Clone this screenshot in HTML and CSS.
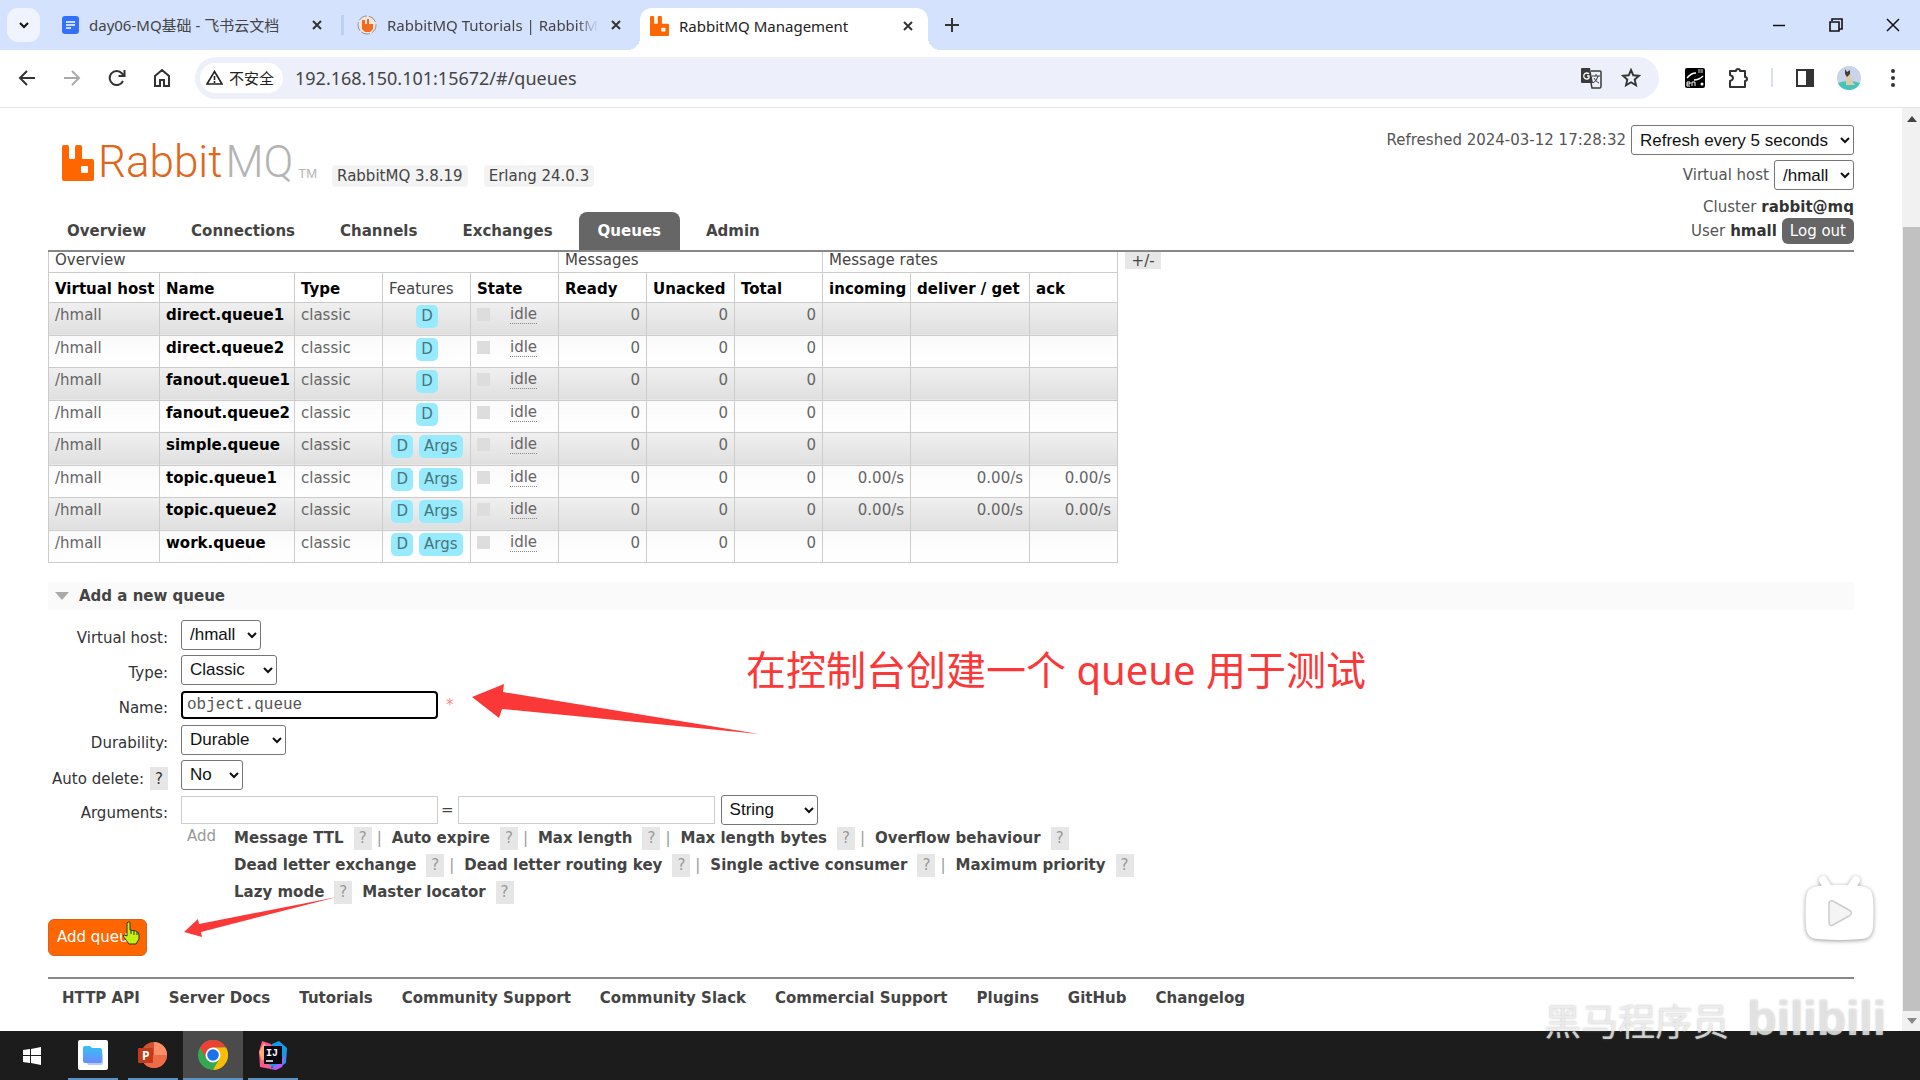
FILE: index.html
```html
<!DOCTYPE html>
<html lang="zh-CN">
<head>
    <meta charset="UTF-8">
    <meta name="viewport" content="width=device-width, initial-scale=1.0">
    <title>RabbitMQ Management</title>
    <link rel="stylesheet" href="styles.css">
</head>
<body>
    <svg class="symbols" aria-hidden="true">
        <symbol id="close" viewBox="0 0 12 12"><path d="M2 2l8 8M10 2l-8 8" fill="none" stroke="currentColor" stroke-width="2"/></symbol>
        <symbol id="rabbit" viewBox="0 0 32 36"><path d="M0 2Q0 0 2 0H5Q7 0 7 2V13Q7 14 8 14H12Q13 14 13 13V2Q13 0 15 0H18Q20 0 20 2V13Q20 14 21 14H30Q32 14 32 16V34Q32 36 30 36H2Q0 36 0 34ZM20 21Q19 21 19 22V27Q19 28 20 28H25Q26 28 26 27V22Q26 21 25 21Z" fill="#f60" fill-rule="evenodd"/></symbol>
    </svg>

    <div class="tab-strip">
        <button class="tab-search" aria-label="Search tabs">
            <svg width="12" height="12" viewBox="0 0 12 12"><path d="M2 4l4 4 4-4" fill="none" stroke="#111" stroke-width="2"/></svg>
        </button>
        <div class="tab">
            <svg width="17" height="18" viewBox="0 0 17 18"><rect width="17" height="18" rx="3" fill="#3370ff"/><path d="M4 6h9M4 9h9M4 12h5" stroke="#fff" stroke-width="1.5"/></svg>
            <span class="tab-title">day06-MQ基础 - 飞书云文档</span>
            <button class="icon-button" aria-label="Close tab"><svg width="12" height="12"><use href="#close"/></svg></button>
        </div>
        <div class="tab tab-second">
            <svg width="20" height="20" viewBox="0 0 20 20"><circle cx="10" cy="10" r="9" fill="#f3e6dc" stroke="#8a8f96" stroke-dasharray="9 2"/><path d="M5 5h3v4h2V4h2v5h4v5l-3 3H8l-3-3z" fill="#f26a21"/></svg>
            <span class="tab-title fade">RabbitMQ Tutorials | RabbitM</span>
            <button class="icon-button" aria-label="Close tab"><svg width="12" height="12"><use href="#close"/></svg></button>
        </div>
        <div class="tab active">
            <svg width="19" height="20" viewBox="0 0 32 36" preserveAspectRatio="none"><use href="#rabbit"/></svg>
            <span class="tab-title">RabbitMQ Management</span>
            <button class="icon-button" aria-label="Close tab"><svg width="12" height="12"><use href="#close"/></svg></button>
        </div>
        <button class="icon-button new-tab" aria-label="New tab">
            <svg width="14" height="14" viewBox="0 0 14 14"><path d="M7 0v14M0 7h14" stroke="#333" stroke-width="2"/></svg>
        </button>
        <div class="window-buttons">
            <button class="icon-button" aria-label="Minimize"><svg width="14" height="14" viewBox="0 0 14 14"><path d="M1 7.500h12" stroke="#111" stroke-width="1.500"/></svg></button>
            <button class="icon-button" aria-label="Restore"><svg width="14" height="14" viewBox="0 0 14 14"><path d="M1 4h9v9H1zM3 3V1h10v10h-3" fill="none" stroke="#111" stroke-width="1.600"/></svg></button>
            <button class="icon-button" aria-label="Close window"><svg width="14" height="14" viewBox="0 0 14 14"><path d="M1 1l12 12M13 1L1 13" stroke="#111" stroke-width="1.500"/></svg></button>
        </div>
    </div>

    <div class="toolbar">
        <button class="icon-button" aria-label="Back"><svg width="18" height="18" viewBox="0 0 18 18"><path d="M17 9H3M9 2L2 9l7 7" fill="none" stroke="#333" stroke-width="2"/></svg></button>
        <button class="icon-button" aria-label="Forward"><svg width="18" height="18" viewBox="0 0 18 18"><path d="M1 9h14M9 2l7 7-7 7" fill="none" stroke="#aaa" stroke-width="2"/></svg></button>
        <button class="icon-button" aria-label="Reload"><svg width="18" height="18" viewBox="0 0 18 18"><path d="M15 12A7 7 0 1 1 14 4.500L16 7M16.500 1v6h-6" fill="none" stroke="#333" stroke-width="2"/></svg></button>
        <button class="icon-button" aria-label="Home"><svg width="18" height="18" viewBox="0 0 18 18"><path d="M2 7l7-6 7 6v10h-5v-6H7v6H2z" fill="none" stroke="#333" stroke-width="2"/></svg></button>
        <div class="omnibox">
            <span class="site-chip">
                <svg width="17" height="15" viewBox="0 0 17 15"><path d="M8.500 1.500L16 14H1z" fill="none" stroke="#222" stroke-width="1.600"/><path d="M8.500 6v4M8.500 11v2" stroke="#222" stroke-width="1.600"/></svg>
                不安全
            </span>
            <input class="url" aria-label="Address" value="192.168.150.101:15672/#/queues">
            <button class="icon-button" aria-label="Translate">
                <svg width="22" height="22" viewBox="0 0 22 22"><path d="M2 1h8l3 15H2q-1 0-1-1V2q0-1 1-1z" fill="#3a3a3a"/><path d="M11 4h9q1 0 1 1v14q0 2-1 2h-8l-1-5" fill="none" stroke="#3a3a3a" stroke-width="1.500"/><path d="M9 7a3 3 0 1 0 0 4V9H7" fill="none" stroke="#fff" stroke-width="1.300"/><path d="M12 9h8M16 7v2M18 9q-1 5-5 7M14 11q2 4 5 5" fill="none" stroke="#3a3a3a"/></svg>
            </button>
            <button class="icon-button" aria-label="Bookmark">
                <svg width="20" height="20" viewBox="0 0 20 20"><path d="M10 2l2.300 5.300 5.700.5-4.300 3.800 1.300 5.700-5-3-5 3 1.300-5.700L2 7.800l5.700-.5z" fill="none" stroke="#333" stroke-width="1.900"/></svg>
            </button>
        </div>
        <div class="extensions">
            <button class="icon-button" aria-label="Translate extension"><svg width="22" height="22" viewBox="0 0 22 22"><rect x="1" y="1" width="20" height="20" rx="2"/><path d="M3 11q4-5 9-5M10 13q5 0 9-4" fill="none" stroke="#fff" stroke-width="1.500"/><path d="M14 3h5M14 5h5M15 2v4M18 2v4" stroke="#999"/><path d="M3 17h3v-2H3v4h3M8 19v-4h3v4" fill="none" stroke="#fff"/><circle cx="18" cy="17" r="1.500" fill="#fff"/></svg></button>
            <button class="icon-button" aria-label="Extensions"><svg width="22" height="22" viewBox="0 0 22 22"><path d="M2 4h6a2 2 0 0 1 4 0h5v6a2 2 0 0 1 0 4v6H2v-6q3-1 3-3T2 8z" fill="none" stroke="#333" stroke-width="2" stroke-linejoin="round"/></svg></button>
            <span class="divider"></span>
            <button class="icon-button" aria-label="Side panel"><svg width="20" height="20" viewBox="0 0 20 20"><path d="M2 2h16v16H2z" fill="none" stroke="#333" stroke-width="2"/><path d="M11 2h7v16h-7z" fill="#333"/></svg></button>
            <button class="icon-button" aria-label="Profile"><svg width="24" height="24" viewBox="0 0 24 24"><circle cx="12" cy="12" r="12" fill="#c9d3ea"/><path d="M1 17q11-4 22 0-3 7-11 7T1 17z" fill="#46c3ba"/><path d="M9 8l4-1 2 8 3 4H9z" fill="#dfcba8"/><path d="M8 3l2 3 3-2v4l-3 3-2-3z" fill="#453d3b"/></svg></button>
            <button class="icon-button" aria-label="Menu"><svg width="20" height="20" viewBox="0 0 20 20"><g fill="#333"><circle cx="10" cy="3" r="2"/><circle cx="10" cy="10" r="2"/><circle cx="10" cy="17" r="2"/></g></svg></button>
        </div>
    </div>

    <div class="viewport">
        <div class="page">
            <header class="header">
                <div class="header-left">
                    <div class="brand">
                        <svg width="32" height="36"><use href="#rabbit"/></svg>
                        <a href="#/" class="logo">Rabbit<span>MQ</span></a>
                        <small class="tm">TM</small>
                        <span class="version">RabbitMQ 3.8.19</span>
                        <span class="version">Erlang 24.0.3</span>
                    </div>
                    <nav class="nav">
                        <a href="#/">Overview</a>
                        <a href="#/connections">Connections</a>
                        <a href="#/channels">Channels</a>
                        <a href="#/exchanges">Exchanges</a>
                        <a href="#/queues" class="selected">Queues</a>
                        <a href="#/users">Admin</a>
                    </nav>
                </div>
                <div class="status">
                    <div class="status-row">
                        <label for="refresh">Refreshed 2024-03-12 17:28:32</label>
                        <select id="refresh"><option>Refresh every 5 seconds</option></select>
                    </div>
                    <div class="status-row">
                        <label for="show-vhost">Virtual host</label>
                        <select id="show-vhost"><option>/hmall</option></select>
                    </div>
                    <div class="status-row short">Cluster <b>rabbit@mq</b></div>
                    <div class="status-row short">User <b>hmall</b> <button class="logout">Log out</button></div>
                </div>
            </header>

            <main>
                <div class="table-wrap">
                    <table class="queues">
                        <colgroup>
                            <col class="w-host"><col class="w-name"><col class="w-col"><col class="w-col"><col class="w-col">
                            <col class="w-col"><col class="w-col"><col class="w-col">
                            <col class="w-col"><col class="w-get"><col class="w-col">
                        </colgroup>
                        <thead>
                            <tr class="groups"><th colspan="5">Overview</th><th colspan="3">Messages</th><th colspan="3">Message rates</th></tr>
                            <tr class="names">
                                <th>Virtual host</th><th>Name</th><th>Type</th><th class="plain">Features</th><th>State</th>
                                <th>Ready</th><th>Unacked</th><th>Total</th><th>incoming</th><th>deliver / get</th><th>ack</th>
                            </tr>
                        </thead>
                        <tbody id="queueRows"></tbody>
                    </table>
                    <button class="columns">+/-</button>
                </div>

                <h2 class="section-title">Add a new queue</h2>
                <form class="queue-form">
                    <label for="vhost">Virtual host:</label>
                    <div class="field"><select id="vhost"><option>/hmall</option></select></div>
                    <label for="type">Type:</label>
                    <div class="field"><select id="type"><option>Classic</option><option>Quorum</option></select></div>
                    <label for="name">Name:</label>
                    <div class="field"><input id="name" class="text name" value="object.queue"><span class="mand">*</span></div>
                    <label for="durable">Durability:</label>
                    <div class="field"><select id="durable"><option>Durable</option><option>Transient</option></select></div>
                    <div class="label-help"><label for="auto">Auto delete:</label><button type="button" class="help dark">?</button></div>
                    <div class="field"><select id="auto"><option>No</option><option>Yes</option></select></div>
                    <label for="arg-key">Arguments:</label>
                    <div class="field">
                        <input id="arg-key" class="text"><span class="equals">=</span><input class="text" aria-label="Argument value">
                        <select aria-label="Argument type"><option>String</option><option>Number</option><option>Boolean</option><option>List</option></select>
                    </div>
                    <div class="argument-links">
                        <span class="add">Add</span>
                        <div>
                            <p><a href="#ttl">Message TTL</a><button type="button" class="help">?</button><i>|</i><a href="#expires">Auto expire</a><button type="button" class="help">?</button><i>|</i><a href="#length">Max length</a><button type="button" class="help">?</button><i>|</i><a href="#bytes">Max length bytes</a><button type="button" class="help">?</button><i>|</i><a href="#overflow">Overflow behaviour</a><button type="button" class="help">?</button></p>
                            <p><a href="#dlx">Dead letter exchange</a><button type="button" class="help">?</button><i>|</i><a href="#dlk">Dead letter routing key</a><button type="button" class="help">?</button><i>|</i><a href="#sac">Single active consumer</a><button type="button" class="help">?</button><i>|</i><a href="#priority">Maximum priority</a><button type="button" class="help">?</button></p>
                            <p><a href="#lazy">Lazy mode</a><button type="button" class="help last">?</button><a href="#locator">Master locator</a><button type="button" class="help">?</button></p>
                        </div>
                    </div>
                    <button type="button" class="submit">Add queue</button>
                </form>
            </main>

            <footer class="footer">
                <a href="#api">HTTP API</a>
                <a href="#docs">Server Docs</a>
                <a href="#tutorials">Tutorials</a>
                <a href="#support">Community Support</a>
                <a href="#slack">Community Slack</a>
                <a href="#commercial">Commercial Support</a>
                <a href="#plugins">Plugins</a>
                <a href="#github">GitHub</a>
                <a href="#changelog">Changelog</a>
            </footer>
        </div>
        <div class="scrollbar">
            <svg width="17" height="20" viewBox="0 0 17 20"><path d="M4 14l5-6 5 6z" fill="#444"/></svg>
            <div class="thumb"></div>
            <svg width="17" height="20" viewBox="0 0 17 20"><path d="M4 7l5 6 5-6z" fill="#888"/></svg>
        </div>
    </div>

    <div class="taskbar">
        <button aria-label="Start" class="start"><svg width="18" height="18" viewBox="0 0 18 18"><path d="M0 3l7-1v6H0zM8 2l10-2v8H8zM0 9h7v7l-7-1zM8 9h10v9L8 16z" fill="#fff"/></svg></button>
        <button aria-label="Files"><svg width="30" height="30" viewBox="0 0 30 30"><defs><linearGradient id="folder" x2="0" y2="1"><stop stop-color="#35c1f4"/><stop offset="1" stop-color="#6b8bff"/></linearGradient></defs><rect width="30" height="30" rx="2" fill="#fff"/><path d="M9 22h14l2-12v13q0 2-2 2H10z" fill="#b7c8ff"/><path d="M5 8q0-2 2-2h5l2 2h8q2 0 2 2v11q0 2-2 2H7q-2 0-2-2z" fill="url(#folder)"/></svg></button>
        <button aria-label="PowerPoint"><svg width="30" height="30" viewBox="0 0 30 30"><circle cx="16" cy="15" r="13" fill="#d35230"/><path d="M16 2a13 13 0 0 1 13 13H16z" fill="#ff8f6b"/><path d="M3 15h26a13 13 0 0 1-26 0z" fill="#ed6c47"/><rect y="8" width="15" height="15" rx="1" fill="#c13b1b"/><text x="4" y="20" class="ppt-letter">P</text></svg></button>
        <button aria-label="Chrome" class="current"><svg width="30" height="30" viewBox="0 0 30 30"><circle cx="15" cy="15" r="15" fill="#34a853"/><path d="M2 7.500A15 15 0 0 1 28 7.500H15L8.500 19z" fill="#ea4335"/><path d="M28 7.500A15 15 0 0 1 15 30l6.500-11.200L15 7.500z" fill="#fbbc05"/><circle cx="15" cy="15" r="7.500" fill="#fff"/><circle cx="15" cy="15" r="5.800" fill="#1a73e8"/></svg></button>
        <button aria-label="IntelliJ IDEA"><svg width="30" height="30" viewBox="0 0 30 30"><path d="M1 12L4 1l9 3 5 8-5 17-11-2z" fill="#fc5a8d"/><path d="M1 12l5-9 7 9-9 9z" fill="#ffad73"/><path d="M14 4l7-3 8 7-1 15-9 6-8-4z" fill="#149be8"/><path d="M12 29l10-6 6-10-4 14-6 3z" fill="#b757f4"/><rect x="6" y="6" width="18" height="18" fill="#0b0712"/><text x="8" y="16" class="ij-letter">IJ</text><path d="M8 21h7" stroke="#fff" stroke-width="1.500"/></svg></button>
    </div>

    <p class="note">在控制台创建一个 queue 用于测试</p>
    <svg class="arrow arrow-name" width="288" height="52" viewBox="0 0 288 52"><path d="M0 14L32 1l-1 8 256 42L30 26l-3 9z" fill="#fb3838"/></svg>
    <svg class="arrow arrow-submit" width="154" height="42" viewBox="0 0 154 42"><path d="M0 36l14-13 1 5L153 1 17 36l1 5z" fill="#fb3838"/></svg>
    <svg class="pointer" width="18" height="24" viewBox="0 0 18 24"><path d="M6 1Q8 0 8 2v7l6 1q3 1 3 4v4l-3 5H7l-6-8q0-2 4 0V2z" fill="#c3f212" stroke="#333"/><path d="M9 9v4M12 10v4M15 11v3" stroke="#333"/></svg>
    <svg class="tv" width="76" height="76" viewBox="0 0 76 76"><path d="M22 6l7 11M55 6l-7 11" stroke="#fff" stroke-width="8" stroke-linecap="round"/><path d="M17 12Q38 10 60 12 71 13 72 24q1 15 0 29-1 12-12 12-22 2-43 0Q6 65 5 53 4 38 5 24 6 13 17 12z" fill="#fff"/><path d="M28 30q0-4 4-3l16 9q5 3 0 6l-16 9q-4 2-4-3z" class="play"/></svg>
    <div class="watermark"><span>黑马程序员</span><b>bilibili</b></div>

    <script>
        const queues = [
            ['direct.queue1', false, ''],
            ['direct.queue2', false, ''],
            ['fanout.queue1', false, ''],
            ['fanout.queue2', false, ''],
            ['simple.queue', true, ''],
            ['topic.queue1', true, '0.00/s'],
            ['topic.queue2', true, '0.00/s'],
            ['work.queue', true, '']
        ];

        document.getElementById('queueRows').innerHTML = queues.map(([name, args, rate]) => `
            <tr>
                <td>/hmall</td>
                <td><a href="#/queues/${name}">${name}</a></td>
                <td>classic</td>
                <td class="features"><abbr>D</abbr>${args ? '<abbr>Args</abbr>' : ''}</td>
                <td><span class="state"><span class="state-box"></span><span class="idle">idle</span></span></td>
                <td class="r">0</td><td class="r">0</td><td class="r">0</td>
                <td class="r">${rate}</td><td class="r">${rate}</td><td class="r">${rate}</td>
            </tr>
        `).join('');
    </script>
</body>
</html>
```
FILE: styles.css
```css
* {
    box-sizing: border-box;
}
body {
    margin: 0;
    height: 100vh;
    display: flex;
    flex-direction: column;
    overflow: hidden;
    position: relative;
    background: #fff;
    color: #444;
    font-family: "DejaVu Sans", Verdana, sans-serif;
    font-size: 15px;
    line-height: 20px;
}
a {
    color: #444;
    font-weight: bold;
    text-decoration: none;
}
button {
    font: inherit;
    border: 0;
    padding: 0;
}
svg {
    display: block;
    flex: none;
}
.symbols {
    position: absolute;
    width: 0;
    height: 0;
}

/* browser chrome */
.tab-strip {
    display: flex;
    align-items: center;
    height: 50px;
    padding: 0 20px 0 7px;
    background: #d5e2fd;
    font-family: "Noto Sans", "Noto Sans CJK SC", sans-serif;
}
.tab-search {
    display: flex;
    align-items: center;
    justify-content: center;
    width: 33px;
    height: 34px;
    border-radius: 11px;
    background: #eff4fe;
}
.icon-button {
    display: flex;
    align-items: center;
    justify-content: center;
    width: 24px;
    height: 24px;
    background: none;
    color: #333;
}
.tab {
    display: flex;
    align-items: center;
    gap: 10px;
    width: 301px;
    height: 42px;
    padding: 0 12px 0 22px;
}
.tab-second {
    width: 299px;
    height: 20px;
    padding-left: 13px;
    padding-right: 15px;
    border-left: 3px solid #b8d0fb;
}
.tab-title {
    flex: 1;
    white-space: nowrap;
}
.fade {
    mask-image: linear-gradient(to right, #000 90%, transparent);
}
.tab.active {
    position: relative;
    align-self: flex-end;
    width: 288px;
    padding: 0 8px 6px 10px;
    border-radius: 12px 12px 0 0;
    background: #fff;
    color: #222;
}
.tab.active::before,
.tab.active::after {
    content: "";
    position: absolute;
    bottom: 0;
    width: 12px;
    height: 12px;
}
.tab.active::before {
    right: 100%;
    background: radial-gradient(circle at 0 0, transparent 12px, #fff 12px);
}
.tab.active::after {
    left: 100%;
    background: radial-gradient(circle at 100% 0, transparent 12px, #fff 12px);
}
.new-tab {
    margin-left: 12px;
}
.window-buttons {
    display: flex;
    gap: 33px;
    margin-left: auto;
    margin-right: -5px;
}
.toolbar {
    display: flex;
    align-items: center;
    gap: 21px;
    height: 58px;
    padding: 0 15px 2px;
    border-bottom: 1px solid #e4e4e8;
}
.omnibox {
    display: flex;
    align-items: center;
    gap: 16px;
    flex: 1;
    height: 42px;
    padding: 0 16px 0 5px;
    border-radius: 21px;
    background: #edf0fa;
    font-family: "Noto Sans", "Noto Sans CJK SC", sans-serif;
}
.site-chip {
    display: flex;
    align-items: center;
    gap: 6px;
    height: 30px;
    padding: 0 9px 0 6px;
    border-radius: 15px;
    background: #fff;
    color: #222;
}
.url {
    flex: 1;
    margin-left: -4px;
    padding: 0;
    border: 0;
    outline: 0;
    background: none;
    color: #444;
    font: 18px "Noto Sans", sans-serif;
}
.extensions {
    display: flex;
    align-items: center;
    gap: 20px;
    padding-left: 3px;
}
.divider {
    width: 2px;
    height: 19px;
    background: #d9e0f2;
}

/* page */
.viewport {
    display: flex;
    flex: 1;
    min-height: 0;
}
.page {
    flex: 1;
    padding: 0 48px;
}
.scrollbar {
    display: flex;
    flex-direction: column;
    width: 18px;
    padding-left: 1px;
    background: #f1f1f1;
}
.thumb {
    flex: 1;
    margin-top: 99px;
    background: #c1c1c1;
}
.header {
    display: flex;
    justify-content: space-between;
    padding-top: 17px;
    border-bottom: 2px solid #888;
}
.header-left {
    display: flex;
    flex-direction: column;
    justify-content: space-between;
}
.brand {
    display: flex;
    align-items: flex-end;
    padding: 18px 0 0 14px;
}
.logo {
    margin-left: 4px;
    color: #e0661b;
    font: 300 44px/38px Roboto, "Liberation Sans", sans-serif;
}
.logo span {
    margin-left: 3px;
    color: #b4b4b4;
}
.tm {
    margin: 0 15px 0 5px;
    color: #b4b4b4;
    font: 13px/14px "Liberation Sans", sans-serif;
}
.version {
    margin: 0 16px -6px 0;
    padding: 1px 5px;
    border-radius: 4px;
    background: #f3f3f3;
}
.nav {
    display: flex;
    gap: 7px;
}
.nav a {
    padding: 9px 19px;
    border-radius: 8px 8px 0 0;
}
.nav .selected {
    background: #666;
    color: #fff;
}
.status {
    display: flex;
    flex-direction: column;
    padding-bottom: 7px;
    color: #555;
}
.status-row {
    display: flex;
    align-items: center;
    justify-content: flex-end;
    gap: 5px;
    height: 35px;
    padding-bottom: 5px;
}
.status-row.short {
    height: 24px;
    padding: 0;
}
.status-row b {
    color: #333;
}
.logout {
    height: 26px;
    padding: 0 8px;
    border-radius: 6px;
    background: #666;
    color: #fff;
}
select {
    height: 30px;
    padding: 0 8px 0 4px;
    border: 1px solid #767676;
    border-radius: 3px;
    background: #fff;
    color: #111;
    font: 17px "Liberation Sans", Arial, sans-serif;
}

.table-wrap {
    display: flex;
    align-items: flex-start;
    gap: 7px;
}
.queues {
    width: 1069px;
    border-collapse: collapse;
    table-layout: fixed;
}
.w-host { width: 111px; }
.w-name { width: 135px; }
.w-col { width: 88px; }
.w-get { width: 119px; }
.queues th,
.queues td {
    padding: 0 5px 0 6px;
    border: 1px solid #ccc;
    text-align: left;
    vertical-align: top;
    white-space: nowrap;
}
.queues th {
    padding-right: 0;
    color: #000;
}
.queues .groups th {
    height: 20px;
    border-top: 0;
    color: #444;
    font-weight: normal;
    line-height: 16px;
}
.names th {
    height: 30px;
    padding-top: 6px;
}
.names .plain {
    color: #444;
    font-weight: normal;
}
.queues td {
    height: 32px;
    padding-top: 2px;
    color: #666;
    background: linear-gradient(#fafafa, #fff);
}
.queues tr:nth-child(odd) td {
    height: 33px;
    background: linear-gradient(#f0f0f0, #dfdfdf);
}
.queues td a {
    color: #000;
}
.queues td.r {
    padding-right: 6px;
    text-align: right;
}
.queues td.features {
    text-align: center;
}
.features abbr {
    display: inline-block;
    margin: 0 2px;
    padding: 0 5px;
    border-radius: 5px;
    background: #98ebfc;
    line-height: 23px;
    color: #487580;
}
.features abbr + abbr {
    margin-left: 4px;
}
.state {
    display: flex;
    align-items: center;
    gap: 20px;
    height: 20px;
}
.state-box {
    width: 13px;
    height: 13px;
    background: #ddd;
}
.idle {
    border-bottom: 1px dotted #888;
    line-height: 17px;
}
.columns {
    width: 36px;
    height: 17px;
    line-height: 14px;
    background: #e7e7e7;
    color: #444;
}
.section-title {
    display: flex;
    align-items: center;
    gap: 10px;
    height: 28px;
    margin: 19px 0 10px;
    padding-left: 7px;
    background: #fafafa;
    font-size: 15px;
}
.section-title::before {
    content: "";
    border: 7px solid transparent;
    border-top: 8px solid #aaa;
    border-bottom: 0;
}
.queue-form {
    display: grid;
    grid-template-columns: 120px 1fr;
    gap: 5px 13px;
    justify-items: start;
}
.queue-form > label,
.label-help {
    justify-self: end;
    height: 30px;
    padding-top: 8px;
    color: #333;
    white-space: nowrap;
}
.label-help {
    display: flex;
    align-items: center;
    gap: 6px;
}
.field {
    display: flex;
    align-items: center;
    height: 30px;
}
.text {
    width: 257px;
    height: 28px;
    padding: 0 4px;
    border: 1px solid #ccc;
    color: #555;
    font: 16px "Liberation Mono", "Courier New", monospace;
}
.name {
    border: 2px solid #000;
    border-radius: 4px;
}
.mand {
    margin-left: 8px;
    color: #f88;
}
.equals {
    margin: 0 4px 0 3px;
}
.field .text + select {
    margin-left: 6px;
}
.argument-links {
    grid-column: 2;
    display: flex;
    gap: 18px;
    margin-top: -3px;
    padding-left: 6px;
    white-space: nowrap;
}
.argument-links .add {
    color: #999;
    line-height: 18px;
}
.argument-links p {
    display: flex;
    align-items: center;
    height: 23px;
    margin: 0 0 4px;
}
.help {
    width: 18px;
    height: 23px;
    background: #e6e6e6;
    color: #999;
}
.help.dark {
    color: #333;
}
p .help {
    margin-left: 10px;
}
.argument-links .last {
    margin-right: 10px;
}
.argument-links i {
    width: 20px;
    padding-left: 5px;
    color: #999;
    font-style: normal;
}
.submit {
    grid-column: 1 / 3;
    height: 37px;
    margin-top: 6px;
    padding: 0 8px;
    border: 1px solid #d9631c;
    border-radius: 6px;
    background: #f60;
    color: #fff;
}
.footer {
    display: flex;
    gap: 29px;
    margin-top: 21px;
    padding: 9px 14px;
    border-top: 2px solid #888;
}

/* windows taskbar */
.taskbar {
    display: flex;
    height: 49px;
    background: #1c1c1c;
}
.taskbar button {
    display: flex;
    align-items: center;
    justify-content: center;
    width: 50px;
    margin: 0 5px;
    background: none;
    border-bottom: 2px solid #5b93c4;
}
.taskbar .start {
    width: 63px;
    margin: 0;
    border: 0;
}
.taskbar .current {
    width: 60px;
    margin: 0;
    background: #4b4b4b;
}
.ppt-letter {
    fill: #fff;
    font: bold 12px "Open Sans", sans-serif;
}
.ij-letter {
    fill: #fff;
    font: bold 10px "Liberation Mono", monospace;
}

/* drawn over the page */
.note {
    position: absolute;
    left: 746px;
    top: 646px;
    margin: 0;
    color: #fb3838;
    font: 40px/48px "Noto Sans", "Noto Sans CJK SC", sans-serif;
}
.arrow,
.pointer,
.tv,
.watermark {
    position: absolute;
}
.arrow-name {
    left: 472px;
    top: 683px;
}
.arrow-submit {
    left: 184px;
    top: 896px;
}
.pointer {
    left: 122px;
    top: 921px;
}
.tv {
    right: 43px;
    top: 874px;
    filter: drop-shadow(0 1px 2px rgba(0, 0, 0, 0.4));
}
.play {
    fill: #f4f4f4;
    stroke: #ccc;
    stroke-width: 1.5;
}
.watermark {
    right: 34px;
    bottom: 36px;
    display: flex;
    align-items: flex-end;
    gap: 18px;
    color: rgba(248, 248, 248, 0.75);
    font: 37px/48px "Noto Sans CJK SC", sans-serif;
    text-shadow: 0 0 2px rgba(140, 140, 140, 0.6);
}
.watermark b {
    color: rgba(236, 236, 236, 0.8);
    font: bold 48px/50px "Liberation Sans", sans-serif;
}
```
